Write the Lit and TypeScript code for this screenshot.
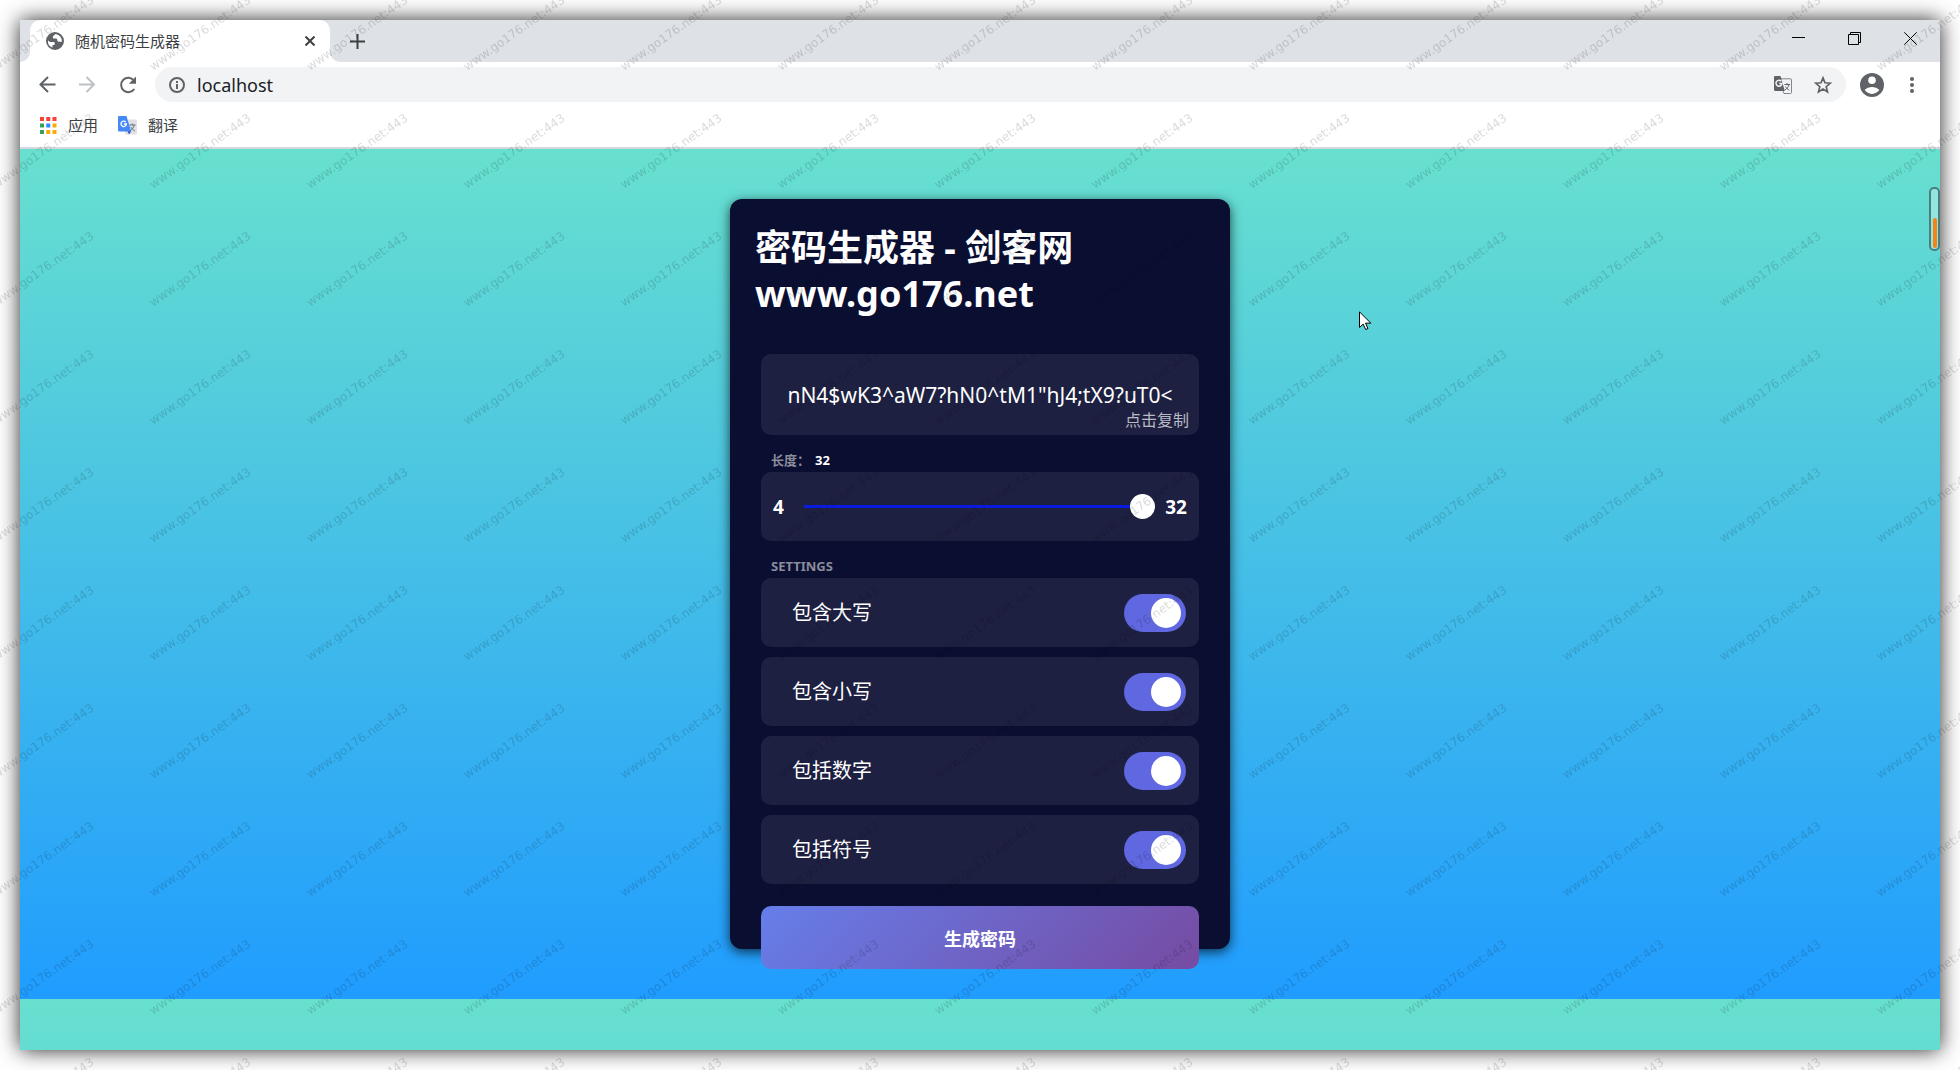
import { LitElement, html, css, svg } from "lit";
import { customElement, state } from "lit/decorators.js";

const globe = svg`<path fill="#5f6368" fill-rule="evenodd" d="M9 0a9 9 0 1 0 0 18A9 9 0 0 0 9 0zM2 8.200c.8 1.300 2 1.900 3.400 1.900h2.200c.7 0 1.100.4 1.100 1.100v.7c0 .8-.6 1.200-1.400 1.200H6.500v2.500A7 7 0 0 1 2 8.200zM9.200 2c-.4 1.200-1.200 1.700-2.300 1.900v1.500c0 .8.500 1.200 1.300 1.200h1.600c1 0 1.500.6 1.500 1.500s.5 1.600 1.500 1.600h3.100A7 7 0 0 0 9.200 2z"/>`;

@customElement("browser-chrome")
export class BrowserChrome extends LitElement {
  static styles = css`
    :host { display: block; background: #fff; color: #3c4043; }
    button { border: 0; padding: 0; background: none; font: inherit; color: inherit; display: grid; place-items: center; }
    svg { display: block; }
    .strip { display: flex; height: 42px; background: #dee1e6; }
    .lead { width: 10px; background: #fff; }
    .lead i { display: block; height: 100%; background: #dee1e6; border-radius: 0 0 10px 0; }
    .tab { width: 300px; box-sizing: border-box; display: flex; align-items: center; gap: 11px; padding: 0 15px 0 16px; background: #fff; border-radius: 10px 10px 0 0; font-size: 15px; line-height: 20px; }
    .tab span { flex: 1; }
    .rest { flex: 1; background: #fff; }
    .rest div { height: 100%; background: #dee1e6; border-radius: 0 0 0 10px; display: flex; align-items: center; padding: 0 23px 0 20px; }
    .space { flex: 1; }
    .wins { display: flex; gap: 43px; padding-bottom: 6px; }
    .bar { display: flex; align-items: center; padding: 5px 20px 0 19px; gap: 20px; }
    .omni { flex: 1; display: flex; align-items: center; gap: 12px; height: 35px; padding: 0 14px; border-radius: 18px; background: #f1f3f4; margin-left: -4px; margin-right: -6px; }
    .omni input { flex: 1; border: 0; padding: 0; background: none; outline: none; font: inherit; font-size: 18px; line-height: 24px; color: #202124; }
    .omni .star { margin-left: 10px; }
    .marks { display: flex; gap: 20px; padding: 13px 20px 12px; border-bottom: 2px solid #d5d8dc; font-size: 15px; line-height: 20px; }
    .marks a { display: flex; align-items: center; gap: 11px; color: inherit; text-decoration: none; }
  `;

  render() {
    const dots = ["#f44336", "#f44336", "#f44336", "#34a15a", "#2a8cff", "#f9ab0a", "#34a15a", "#f9ab0a", "#f9ab0a"];
    return html`
      <div class="strip">
        <div class="lead"><i></i></div>
        <div class="tab">
          <svg width="18" height="18" viewBox="0 0 18 18">${globe}</svg>
          <span>随机密码生成器</span>
          <button aria-label="关闭标签页"><svg width="10" height="10" viewBox="0 0 10 10"><path d="M.5.5l9 9M9.500.5l-9 9" stroke="#3c4043" stroke-width="2"/></svg></button>
        </div>
        <div class="rest"><div>
          <button aria-label="新标签页"><svg width="15" height="15" viewBox="0 0 15 15"><path d="M7.500 0v15M0 7.500h15" stroke="#3c4043" stroke-width="2"/></svg></button>
          <span class="space"></span>
          <span class="wins">
            <button aria-label="最小化"><svg width="13" height="13" viewBox="0 0 13 13"><path d="M0 5.500h13" stroke="#000"/></svg></button>
            <button aria-label="还原"><svg width="13" height="13" viewBox="0 0 13 13"><path d="M.5 2.500h10v10H.5zM2.500 2.500v-2h10v10h-2" fill="none" stroke="#000"/></svg></button>
            <button aria-label="关闭"><svg width="13" height="13" viewBox="0 0 13 13"><path d="M.3.3l12.400 12.400M12.700.3L.3 12.700" stroke="#000"/></svg></button>
          </span>
        </div></div>
      </div>
      <div class="bar">
        <button aria-label="后退"><svg width="20" height="20" viewBox="0 0 20 20"><path d="M16.500 9.500h-15M9 2L1.500 9.500 9 17" fill="none" stroke="#5f6368" stroke-width="2"/></svg></button>
        <button aria-label="前进"><svg width="20" height="20" viewBox="0 0 20 20"><path d="M0 9.500h15M7.500 2L15 9.500 7.500 17" fill="none" stroke="#bdc1c6" stroke-width="2"/></svg></button>
        <button aria-label="重新加载"><svg width="20" height="20" viewBox="0 0 20 20"><path d="M15 5.500A7.200 7.200 0 1 0 15.300 14" fill="none" stroke="#5f6368" stroke-width="2"/><path d="M17 1.500V8.700H9.800z" fill="#5f6368"/></svg></button>
        <div class="omni">
          <svg width="16" height="16" viewBox="0 0 16 16"><circle cx="8" cy="8" r="7" fill="none" stroke="#5f6368" stroke-width="2"/><path d="M8 7v5M8 4v2" stroke="#5f6368" stroke-width="2"/></svg>
          <input aria-label="地址" .value=${"localhost"} />
          <button aria-label="翻译此页"><svg width="18" height="18" viewBox="0 0 18 18"><path d="M7 2.800h9.500a1 1 0 0 1 1 1v12.700a1 1 0 0 1-1 1H10L9 15" fill="none" stroke="#80868b"/><path d="M1.200 0H6.500L10.800 15H1.200A1.200 1.200 0 0 1 0 13.800V1.200A1.200 1.200 0 0 1 1.200 0z" fill="#5f6368"/><path d="M7.300 5.200A3 3 0 1 0 8 7.600H5.200" fill="none" stroke="#f1f3f4" stroke-width="1.500"/><path d="M10.500 8.500h5.500M13 7v1.500M15 8.500c-.5 2.500-2 4-4 5.500M11.500 10.500c.8 1.500 2 2.500 3.800 3.800" fill="none" stroke="#5f6368"/></svg></button>
          <button class="star" aria-label="收藏"><svg width="18" height="18" viewBox="0 0 18 18"><path d="M9 1.900l2 4.900 5.300.4-4.100 3.500 1.300 5.200L9 13.100l-4.500 2.800 1.300-5.200-4.100-3.500 5.300-.4z" fill="none" stroke="#5f6368" stroke-width="1.700"/></svg></button>
        </div>
        <button aria-label="个人资料"><svg width="24" height="24" viewBox="0 0 24 24"><circle cx="12" cy="12" r="12" fill="#5f6368"/><circle cx="12" cy="7.300" r="3.800" fill="#fff"/><path d="M4.700 17c1.500-2.300 5-3.100 7.300-3.100s5.800.8 7.300 3.100a8.800 8.800 0 0 1-14.600 0z" fill="#fff"/></svg></button>
        <button aria-label="菜单"><svg width="16" height="18" viewBox="0 0 16 18"><g fill="#5f6368"><circle cx="8" cy="3" r="2"/><circle cx="8" cy="9" r="2"/><circle cx="8" cy="15" r="2"/></g></svg></button>
      </div>
      <nav class="marks">
        <a href="#apps"><svg width="17" height="17" viewBox="0 0 17 17">${dots.map((c, i) => svg`<rect x=${(i % 3) * 6.25} y=${Math.floor(i / 3) * 6.5} width="4" height="4" fill=${c}/>`)}</svg>应用</a>
        <a href="#translate"><svg width="19" height="19" viewBox="0 0 19 19"><rect x="7" y="3.500" width="12" height="15" rx="1" fill="#dfe1e5"/><path d="M9.500 15l1.500 3.500 2.300-3.500z" fill="#3450b8"/><path d="M1 0h7.500l4.600 15.500H1a1 1 0 0 1-1-1V1a1 1 0 0 1 1-1z" fill="#4688f4"/><path d="M7.700 6A2.700 2.700 0 1 0 8.400 8H6" fill="none" stroke="#fff" stroke-width="1.300"/><path d="M11.500 9h6M14.300 7.500V9M16.300 9c-.6 2.500-2 4.300-4 5.800M12.800 11c.8 1.500 2.300 3 4 3.900" fill="none" stroke="#5f6f82"/></svg>翻译</a>
      </nav>
    `;
  }
}

@customElement("password-card")
export class PasswordCard extends LitElement {
  static styles = css`
    :host { display: block; box-sizing: border-box; width: 500px; max-width: 100%; padding: 26px 25px 0; border-radius: 12px; background: #0a0e31; color: #fff; box-shadow: 0 3px 12px rgba(0, 0, 0, 0.7); }
    h1 { margin: 0; font-size: 36px; line-height: 46px; font-weight: 700; }
    .body { padding: 37px 6px 0; }
    .panel { box-sizing: border-box; background: rgba(255, 255, 255, 0.08); border-radius: 10px; }
    .result { position: relative; height: 81px; display: flex; align-items: center; justify-content: center; font-size: 21px; line-height: 26px; white-space: nowrap; }
    .copy { position: absolute; right: 10px; bottom: 5px; border: 0; padding: 0; background: none; font: inherit; font-size: 16px; line-height: 20px; color: rgba(255, 255, 255, 0.7); }
    .caption { display: flex; gap: 5px; margin-top: 16px; padding: 0 10px 2px; font-size: 13px; line-height: 19px; font-weight: 700; color: #8b8c9c; }
    .caption output { color: #fff; }
    .range { height: 69px; display: flex; align-items: center; gap: 10px; padding: 0 12px; font-size: 19px; line-height: 24px; font-weight: 700; }
    .range span:first-child { flex: 0 0 21px; }
    .range input { flex: 1; min-width: 0; margin: 0; height: 25px; appearance: none; background: none; }
    .range input::-webkit-slider-runnable-track { height: 3px; background: #0a1be0; }
    .range input::-webkit-slider-thumb { appearance: none; width: 25px; height: 25px; margin-top: -11px; border-radius: 50%; background: #fff; }
    .options { display: grid; gap: 10px; }
    .option { height: 69px; display: flex; align-items: center; justify-content: space-between; padding: 0 13px 0 31px; font-size: 20px; line-height: 26px; }
    .option input { appearance: none; box-sizing: border-box; margin: 0; width: 62px; height: 38px; padding: 4px 5px; border-radius: 19px; background: #3b3e58; display: flex; }
    .option input::before { content: ""; width: 30px; height: 30px; border-radius: 50%; background: #fff; }
    .option input:checked { background: #5f68e0; justify-content: flex-end; }
    .make { display: block; width: 100%; height: 63px; margin: 22px 0 -20px; border: 0; border-radius: 10px; color: #fff; font: inherit; font-size: 18px; font-weight: 700; background: linear-gradient(135deg, #667eea 0%, #764ba2 100%); }
  `;

  @state() private length = 32;

  render() {
    return html`
      <h1>密码生成器 - 剑客网<br />www.go176.net</h1>
      <div class="body">
        <div class="panel result">
          <span>nN4$wK3^aW7?hN0^tM1"hJ4;tX9?uT0&lt;</span>
          <button class="copy">点击复制</button>
        </div>
        <div class="caption"><label for="len">长度：</label><output for="len">${this.length}</output></div>
        <div class="panel range">
          <span>4</span>
          <input id="len" type="range" min="4" max="32" .value=${String(this.length)}
            @input=${(e: Event) => (this.length = Number((e.target as HTMLInputElement).value))} />
          <span>32</span>
        </div>
        <div class="caption">SETTINGS</div>
        <div class="options">
          ${["包含大写", "包含小写", "包括数字", "包括符号"].map(
            (t, i) => html`<div class="panel option"><label for="o${i}">${t}</label><input id="o${i}" type="checkbox" checked /></div>`
          )}
        </div>
        <button class="make">生成密码</button>
      </div>
    `;
  }
}

@customElement("app-root")
export class AppRoot extends LitElement {
  static styles = css`
    :host { display: block; font-family: "Noto Sans", "Noto Sans CJK SC", sans-serif; }
    .desk { position: relative; box-sizing: border-box; min-height: 100vh; padding: 20px; display: flex; background: #fff; overflow: hidden; }
    .window { flex: 1; min-width: 0; display: flex; flex-direction: column; box-shadow: 0 0 20px rgba(0, 0, 0, 0.85); }
    .page { position: relative; flex: 1; display: flex; justify-content: center; align-items: flex-start; padding: 50px 20px; background: linear-gradient(to top, #209cff 0%, #68e0cf 100%) 0 0 / 100% 850px; }
    .gauge { position: absolute; right: 0; top: 38px; box-sizing: border-box; width: 11px; height: 64px; border: 2px solid #4a7f7e; border-radius: 5px; background: #93e6df; display: flex; align-items: flex-end; justify-content: center; padding: 1px; }
    .gauge i { width: 4px; height: 30px; border-radius: 2px; background: #f98217; }
    .pointer { position: absolute; left: calc(50% + 379px); top: 162px; }
    .marks { position: absolute; inset: 0; width: 100%; height: 100%; pointer-events: none; }
    .marks text { font: 12px "DejaVu Sans", sans-serif; fill: #000; fill-opacity: 0.15; }
  `;

  render() {
    return html`
      <div class="desk">
        <div class="window">
          <browser-chrome></browser-chrome>
          <main class="page">
            <password-card></password-card>
            <div class="gauge"><i></i></div>
            <svg class="pointer" width="13" height="20" viewBox="0 0 13 20"><path d="M.5.8v15.700l3.600-3.400 2.600 5.400 2.300-1-2.500-5.300h5.300z" fill="#fff" stroke="#000"/></svg>
          </main>
        </div>
        <svg class="marks" aria-hidden="true">
          <defs>
            <pattern id="mark" x="120" y="108" width="157" height="118" patternUnits="userSpaceOnUse">
              <text transform="translate(33 81) rotate(-35)">www.go176.net:443</text>
            </pattern>
          </defs>
          <rect width="100%" height="100%" fill="url(#mark)" />
        </svg>
      </div>
    `;
  }
}
